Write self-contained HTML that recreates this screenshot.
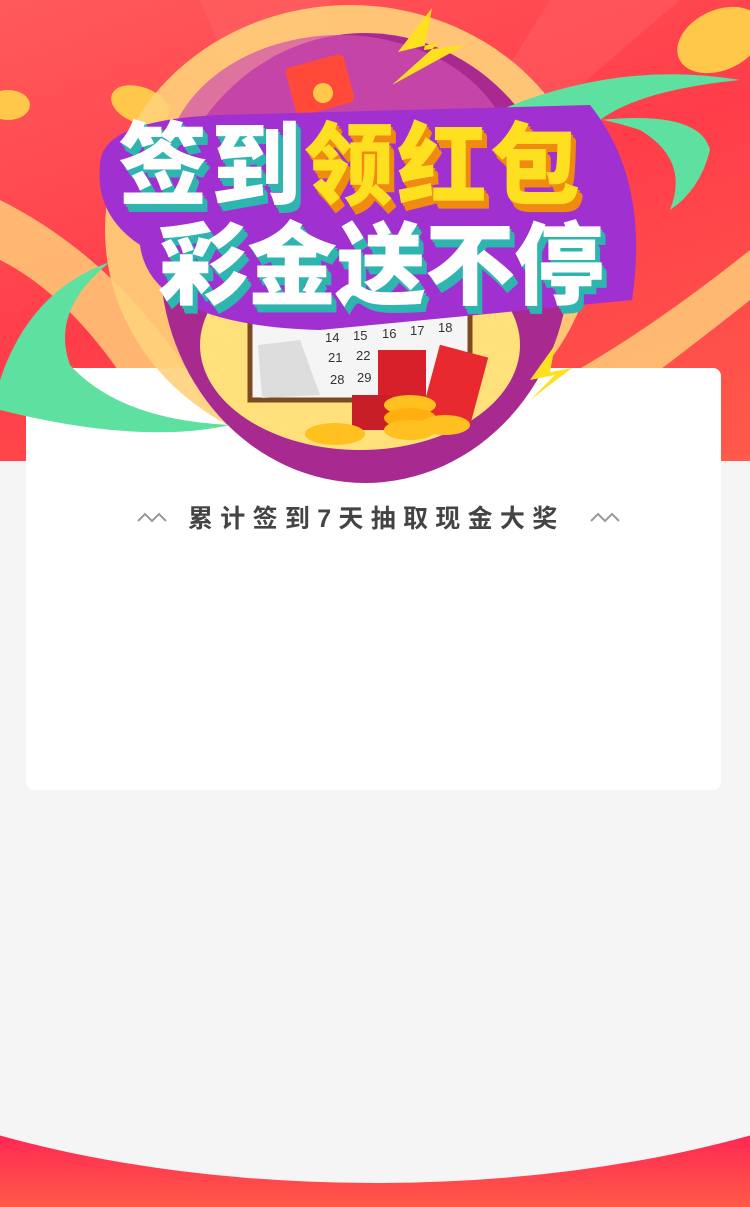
<!DOCTYPE html>
<html><head><meta charset="utf-8"><style>
*{margin:0;padding:0;box-sizing:border-box}
body{width:750px;height:1207px;overflow:hidden;background:#f5f5f5;position:relative;font-family:"Liberation Sans","Noto Sans CJK SC",sans-serif}
.hdr{position:absolute;left:0;top:0;width:750px;height:461px;overflow:hidden;background:linear-gradient(160deg,#ff5a5a 0%,#ff3d4a 50%,#ff5a4a 100%)}
.ab{position:absolute}
.t{position:absolute;font-weight:900;font-size:90px;letter-spacing:-1px;color:#fff;text-shadow:2px 3px 0 #2fb5b0,4px 6px 0 #2fb5b0,5px 8px 0 #2fb5b0;line-height:1}
.card{position:absolute;left:26px;top:368px;width:695px;height:422px;background:#fff;border-radius:8px}
.sub{position:absolute;top:503px;left:188px;font-size:25px;color:#444;letter-spacing:7.3px;font-weight:bold;white-space:nowrap;line-height:32px}
.bot{position:absolute;left:-300px;top:619px;width:1350px;height:564px;border-radius:50%;background:#f5f5f5}
.bg{position:absolute;left:0;top:1130px;width:750px;height:77px;background:linear-gradient(#ff2455,#ff5a48)}
</style></head><body>
<div class="hdr">
<svg class="ab" width="750" height="461" style="left:0;top:0">
<polygon points="200,0 330,0 300,240" fill="#ff6a6a" opacity=".4"/>
<polygon points="550,0 680,0 400,240" fill="#ff7070" opacity=".3"/>
<path d="M0,200 Q120,260 200,390 L150,420 Q80,300 0,260Z" fill="#ffd37a" opacity=".8"/>
<path d="M750,250 Q650,330 560,380 L620,400 Q700,340 750,300Z" fill="#ffd37a" opacity=".8"/>
<ellipse cx="720" cy="40" rx="45" ry="30" fill="#ffc84a" transform="rotate(-25 720 40)"/>
<ellipse cx="140" cy="105" rx="30" ry="18" fill="#ffc84a" transform="rotate(20 140 105)"/>
<ellipse cx="8" cy="105" rx="22" ry="15" fill="#ffc84a"/>
</svg>
</div>
<div class="bg"></div>
<div class="bot"></div>
<div class="card"></div>
<svg class="ab" width="750" height="490" style="left:0;top:0">
<ellipse cx="350" cy="230" rx="245" ry="225" fill="#ffd27a" opacity=".9"/>
<ellipse cx="365" cy="258" rx="205" ry="225" fill="#a82a90"/>
<ellipse cx="340" cy="170" rx="175" ry="135" fill="#d050b0" opacity=".7"/>
<ellipse cx="360" cy="345" rx="160" ry="105" fill="#ffe07a"/>
<rect x="250" y="300" width="220" height="100" fill="#f5f5f5" stroke="#7a4a20" stroke-width="5"/>
<g font-family="Liberation Sans" font-size="13" fill="#333"><text x="325" y="342">14</text><text x="353" y="340">15</text><text x="382" y="338">16</text><text x="410" y="335">17</text><text x="438" y="332">18</text><text x="328" y="362">21</text><text x="356" y="360">22</text><text x="330" y="384">28</text><text x="357" y="382">29</text></g>
<path d="M258,345 L300,340 L320,395 L262,398Z" fill="#ddd"/>
<rect x="290" y="60" width="60" height="50" rx="6" fill="#ff4a3a" transform="rotate(-15 320 85)"/>
<circle cx="323" cy="93" r="10" fill="#ffc84a"/>
<polygon points="432,8 398,52 440,42 392,85 465,45 424,50" fill="#ffe020"/>
<polygon points="555,345 530,380 555,375 530,400 572,368 550,372" fill="#ffe020"/>
<path d="M0,380 Q30,290 110,262 Q50,310 70,365 Q120,420 230,425 Q140,445 0,410Z" fill="#5ee0a0"/>
<path d="M500,110 Q620,60 740,80 Q640,90 600,120 Q700,110 710,150 Q700,190 670,210 Q690,160 640,130 Q580,110 500,110Z" fill="#5ee0a0"/>
<rect x="378" y="350" width="48" height="70" fill="#d8202a"/><rect x="430" y="350" width="50" height="70" fill="#e82a30" transform="rotate(15 455 385)"/>
<rect x="352" y="395" width="40" height="35" fill="#c81e28"/>
<ellipse cx="410" cy="405" rx="26" ry="10" fill="#ffc020"/><ellipse cx="410" cy="418" rx="26" ry="10" fill="#ffb010"/><ellipse cx="410" cy="430" rx="26" ry="10" fill="#ffc020"/>
<ellipse cx="335" cy="434" rx="30" ry="11" fill="#ffc020"/><ellipse cx="445" cy="425" rx="25" ry="10" fill="#ffc020"/>
<path d="M100,165 Q100,120 220,115 L590,105 Q650,180 632,300 L320,330 Q150,325 140,245 Q95,215 100,165Z" fill="#a030d0"/>
</svg>
<div class="t" style="left:118px;top:122px;letter-spacing:3px">签到<span style="color:#ffe020;text-shadow:2px 3px 0 #f08a10,4px 6px 0 #f08a10,5px 8px 0 #f08a10">领红包</span></div>
<div class="t" style="left:158px;top:222px">彩金送不停</div>
<svg class="ab" width="30" height="14" style="left:137px;top:510px"><path d="M1,11 L8,4 L15,11 L22,4 L29,11" fill="none" stroke="#999" stroke-width="2"/></svg>
<div class="sub">累计签到7天抽取现金大奖</div>
<svg class="ab" width="30" height="14" style="left:590px;top:510px"><path d="M1,11 L8,4 L15,11 L22,4 L29,11" fill="none" stroke="#999" stroke-width="2"/></svg>
</body></html>
